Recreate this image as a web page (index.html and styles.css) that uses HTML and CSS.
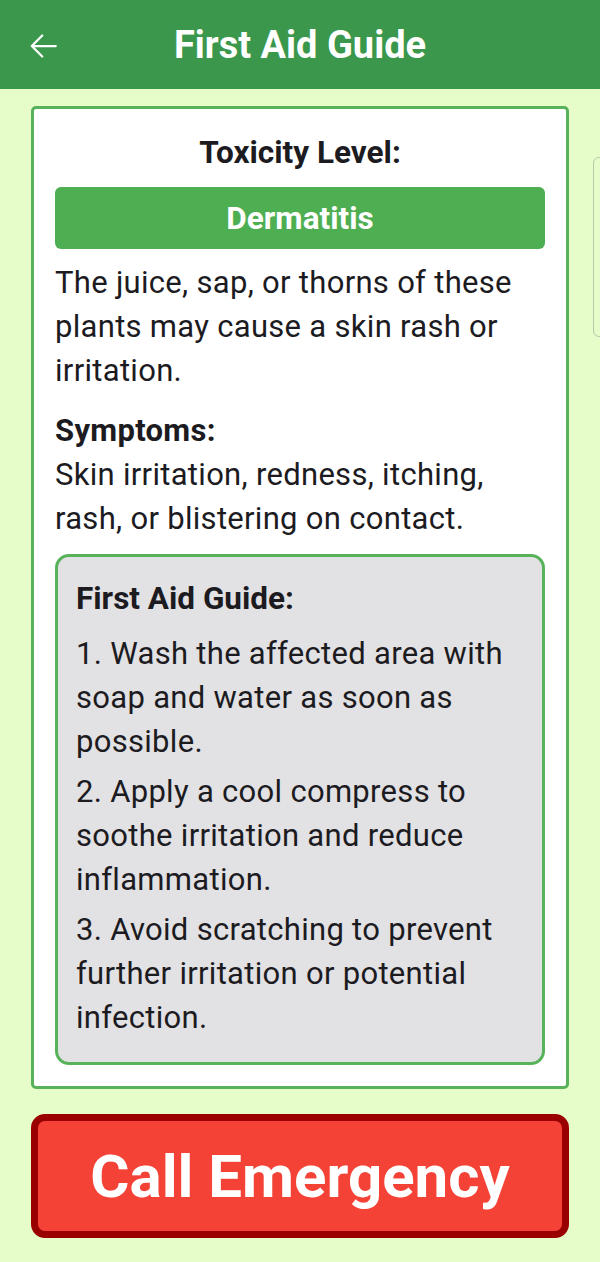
FILE: index.html
```html
<!DOCTYPE html>
<html>
<head>
<meta charset="utf-8">
<link rel="stylesheet" href="styles.css">
</head>
<body>
<header class="appbar">
  <svg class="back" width="36" height="36" viewBox="0 0 24 24"><path d="M20.5 12H4.5M11.5 5l-7 7 7 7" fill="none" stroke="#fff" stroke-width="1.5" stroke-linecap="round" stroke-linejoin="round"/></svg>
  <h1 class="title">First Aid Guide</h1>
</header>
<main class="content">
  <section class="card">
    <h2 class="label">Toxicity Level:</h2>
    <div class="badge">Dermatitis</div>
    <p class="text">The juice, sap, or thorns of these plants may cause a skin rash or irritation.</p>
    <p class="text"><strong>Symptoms:</strong><br>Skin irritation, redness, itching, rash, or blistering on contact.</p>
    <div class="guide">
      <h3 class="guide-title">First Aid Guide:</h3>
      <p class="step">1. Wash the affected area with soap and water as soon as possible.</p>
      <p class="step">2. Apply a cool compress to soothe irritation and reduce inflammation.</p>
      <p class="step">3. Avoid scratching to prevent further irritation or potential infection.</p>
    </div>
  </section>
  <button class="emergency">Call Emergency</button>
  <div class="scroll-hint"></div>
</main>
</body>
</html>
```
FILE: styles.css
```css
* { box-sizing: border-box; }
html, body { margin: 0; padding: 0; }
body {
  width: 600px;
  height: 1262px;
  background: #e6fcc9;
  font-family: Roboto, "Noto Sans", sans-serif;
  color: #1c1b1f;
  overflow: hidden;
}
.appbar {
  height: 89px;
  background: #3a974b;
  display: flex;
  align-items: center;
  justify-content: center;
  position: relative;
}
.back {
  position: absolute;
  left: 25px;
  top: 28px;
}
.title {
  margin: 0;
  color: #fff;
  font-size: 38px;
  font-weight: 700;
}
.content {
  position: relative;
  padding: 17px 31px 0;
  display: flex;
  flex-direction: column;
  gap: 25px;
}
.card {
  background: #fff;
  border: 3px solid #57b25a;
  border-radius: 5px;
  padding: 24px 21px 21px;
  display: flex;
  flex-direction: column;
}
.label {
  margin: 0 0 14px;
  text-align: center;
  font-size: 31.5px;
  font-weight: 700;
  line-height: 40px;
}
.badge {
  height: 62px;
  background: #4eae52;
  border-radius: 6px;
  color: #fff;
  font-size: 31.5px;
  font-weight: 700;
  display: flex;
  align-items: center;
  justify-content: center;
}
.text {
  margin: 12px 0 0;
  font-size: 31px;
  letter-spacing: 0.3px;
  line-height: 44px;
}
.text + .text { margin-top: 16px; }
.text strong { font-weight: 700; }
.guide {
  margin-top: 13px;
  background: #e2e1e3;
  border: 3px solid #57b25a;
  border-radius: 14px;
  padding: 20px 18px 22px;
}
.guide-title {
  margin: 0 0 11px;
  font-size: 31.5px;
  font-weight: 700;
  line-height: 44px;
}
.step {
  margin: 6px 0 0;
  font-size: 31px;
  letter-spacing: 0.3px;
  line-height: 44px;
}
.emergency {
  height: 124px;
  background: #f44336;
  border: 7px solid #9b0000;
  border-radius: 14px;
  color: #fff;
  font-family: Roboto, "Noto Sans", sans-serif;
  font-size: 60px;
  font-weight: 700;
  padding: 0;
}
.scroll-hint {
  position: absolute;
  right: -10px;
  top: 68px;
  width: 17px;
  height: 180px;
  border: 1px solid #b9c7ad;
  border-radius: 6px;
}
```
